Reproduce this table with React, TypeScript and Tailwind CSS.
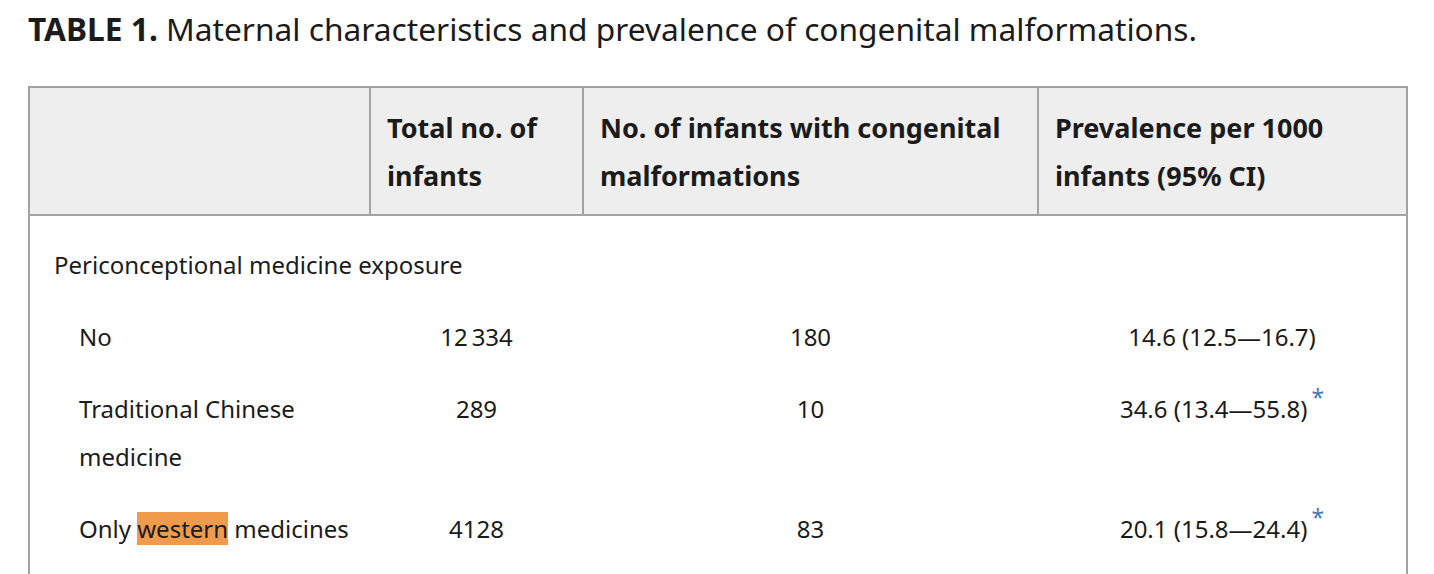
import React from 'react';

type Row = {
    label: React.ReactNode;
    total: string;
    cases: string;
    prevalence: string;
    star?: boolean;
};

const rows: Row[] = [
    { label: 'No', total: '12\u2009334', cases: '180', prevalence: '14.6 (12.5\u201416.7)' },
    { label: 'Traditional Chinese medicine', total: '289', cases: '10', prevalence: '34.6 (13.4\u201455.8)', star: true },
    {
        label: (
            <>
                Only <span className="bg-[#f09b4b]">western</span> medicines
            </>
        ),
        total: '4128',
        cases: '83',
        prevalence: '20.1 (15.8\u201424.4)',
        star: true,
    },
];

const Star: React.FC = () => (
    <sup className="relative -top-[3px] ml-[4px] text-[23px] text-[#4a79b0] align-super leading-none">*</sup>
);

const App: React.FC = () => {
    return (
        <div className="w-[1434px] h-[574px] overflow-hidden bg-white text-[#1b1b1b] font-['Noto_Sans',sans-serif]">
            <h2 className="pl-[28px] pt-[9px] text-[31.7px] leading-[40px] font-normal">
                <span className="font-bold">TABLE 1.</span> Maternal characteristics and prevalence of congenital malformations.
            </h2>

            <table className="ml-[28px] mt-[37px] w-[1378px] table-fixed border-collapse border-2 border-[#a3a3a3]">
                <colgroup>
                    <col className="w-[341px]" />
                    <col className="w-[213px]" />
                    <col className="w-[455px]" />
                    <col className="w-[369px]" />
                </colgroup>
                <thead>
                    <tr className="bg-[#eeeeee] text-left text-[27px] leading-[48px]">
                        <th className="border-2 border-[#a3a3a3] px-[16px] pt-[16px] pb-[14px] font-bold"></th>
                        <th className="border-2 border-[#a3a3a3] px-[16px] pt-[16px] pb-[14px] font-bold">Total no. of infants</th>
                        <th className="border-2 border-[#a3a3a3] px-[16px] pt-[16px] pb-[14px] font-bold">No. of infants with congenital malformations</th>
                        <th className="border-2 border-[#a3a3a3] px-[16px] pt-[16px] pb-[14px] font-bold">Prevalence per 1000 infants (95% CI)</th>
                    </tr>
                </thead>
                <tbody className="text-[24px] leading-[48px]">
                    <tr>
                        <td colSpan={4} className="pl-[24px] pt-[25px] pb-[12px]">Periconceptional medicine exposure</td>
                    </tr>
                    {rows.map((r, i) => (
                        <tr key={i} className="align-top">
                            <td className="pl-[49px] pr-[12px] py-[12px]">{r.label}</td>
                            <td className="pt-[12px] text-center">{r.total}</td>
                            <td className="pt-[12px] text-center">{r.cases}</td>
                            <td className="pt-[12px] text-center">
                                {r.prevalence}
                                {r.star && <Star />}
                            </td>
                        </tr>
                    ))}
                    <tr>
                        <td colSpan={4} className="h-[60px]"></td>
                    </tr>
                </tbody>
            </table>
        </div>
    );
};

export default App;
